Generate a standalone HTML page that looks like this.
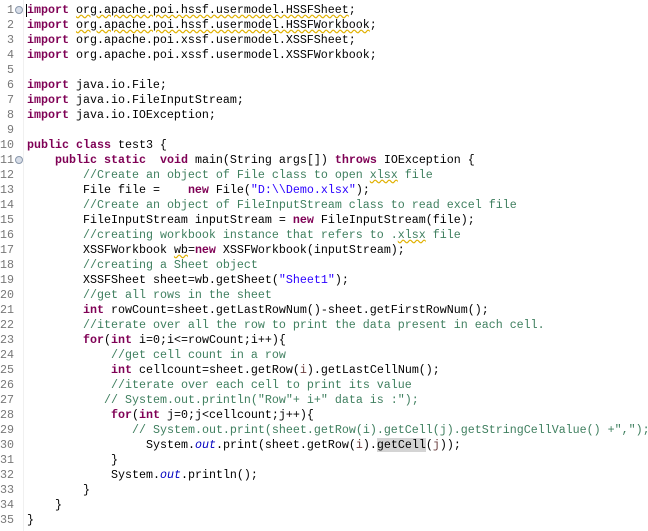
<!DOCTYPE html><html><head><style>
body{margin:0;width:648px;height:531px;background:#fff;overflow:hidden;position:relative;font-family:"Liberation Mono",monospace;font-size:11.67px}
.g{position:absolute;left:0;top:0;width:23px;height:531px;border-right:1px solid #f0f0f0}
.n{position:absolute;width:14px;text-align:right;color:#787878;height:15px;line-height:15px}
.l{position:absolute;white-space:pre;height:15px;line-height:15px;color:#000}
.k{color:#7f0055;font-weight:bold}.c{color:#3f7f5f}.s{color:#2a00ff}.f{color:#0000c0;font-style:italic}.v{color:#6a3e3e}
.u{text-decoration:underline wavy #e0b000}
.fold{position:absolute;left:15px;width:8px;height:8px;border-radius:50%;background:#d8dee8;border:1px solid #8a98ac;box-sizing:border-box}
</style></head><body>
<div class="g"></div>
<div class="fold" style="top:6px"></div><div class="fold" style="top:156px"></div>
<div id="nums"></div>
<script>
var L=[
[27,'<span class="k">import</span> <span class="u">org.apache.poi.hssf.usermodel.HSSFSheet</span>;'],
[27,'<span class="k">import</span> <span class="u">org.apache.poi.hssf.usermodel.HSSFWorkbook</span>;'],
[27,'<span class="k">import</span> org.apache.poi.xssf.usermodel.XSSFSheet;'],
[27,'<span class="k">import</span> org.apache.poi.xssf.usermodel.XSSFWorkbook;'],
[27,''],
[27,'<span class="k">import</span> java.io.File;'],
[27,'<span class="k">import</span> java.io.FileInputStream;'],
[27,'<span class="k">import</span> java.io.IOException;'],
[27,''],
[27,'<span class="k">public</span> <span class="k">class</span> test3 {'],
[55,'<span class="k">public</span> <span class="k">static</span>  <span class="k">void</span> main(String args[]) <span class="k">throws</span> IOException {'],
[83,'<span class="c">//Create an object of File class to open <span class="u">xlsx</span> file</span>'],
[83,'File file =    <span class="k">new</span> File(<span class="s">"D:\\\\Demo.xlsx"</span>);'],
[83,'<span class="c">//Create an object of FileInputStream class to read excel file</span>'],
[83,'FileInputStream inputStream = <span class="k">new</span> FileInputStream(file);'],
[83,'<span class="c">//creating workbook instance that refers to .<span class="u">xlsx</span> file</span>'],
[83,'XSSFWorkbook <span class="u">wb</span>=<span class="k">new</span> XSSFWorkbook(inputStream);'],
[83,'<span class="c">//creating a Sheet object</span>'],
[83,'XSSFSheet sheet=wb.getSheet(<span class="s">"Sheet1"</span>);'],
[83,'<span class="c">//get all rows in the sheet</span>'],
[83,'<span class="k">int</span> rowCount=sheet.getLastRowNum()-sheet.getFirstRowNum();'],
[83,'<span class="c">//iterate over all the row to print the data present in each cell.</span>'],
[83,'<span class="k">for</span>(<span class="k">int</span> i=0;i&lt;=rowCount;i++){'],
[111,'<span class="c">//get cell count in a row</span>'],
[111,'<span class="k">int</span> cellcount=sheet.getRow(<span class="v">i</span>).getLastCellNum();'],
[111,'<span class="c">//iterate over each cell to print its value</span>'],
[104,'<span class="c">// System.out.println("Row"+ i+" data is :");</span>'],
[111,'<span class="k">for</span>(<span class="k">int</span> j=0;j&lt;cellcount;j++){'],
[132,'<span class="c">// System.out.print(sheet.getRow(i).getCell(j).getStringCellValue() +",");</span>'],
[146,'System.<span class="f">out</span>.print(sheet.getRow(<span class="v">i</span>).<span style="background:#d4d4d4">getCell</span>(<span class="v">j</span>));'],
[111,'}'],
[111,'System.<span class="f">out</span>.println();'],
[83,'}'],
[55,'}'],
[27,'}']];
var h='';for(var i=0;i<L.length;i++){var t=3+i*15;h+='<div class="n" style="top:'+t+'px">'+(i+1)+'</div><div class="l" style="top:'+t+'px;left:'+L[i][0]+'px">'+L[i][1]+'</div>';}
document.getElementById('nums').innerHTML=h;
</script>
<div style="position:absolute;left:26px;top:4px;width:1px;height:13px;background:#000"></div>
</body></html>
